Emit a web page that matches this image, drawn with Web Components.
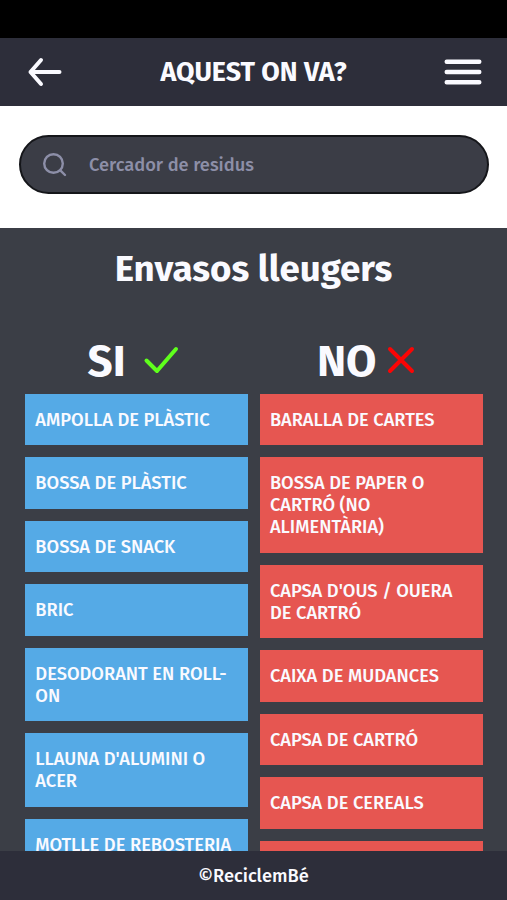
<!DOCTYPE html>
<html lang="ca">
<head>
<meta charset="utf-8">
<meta name="viewport" content="width=device-width, initial-scale=1">
<title>ReciclemBé</title>
<style>
    html, body {
        margin: 0;
        height: 100%;
        overflow: hidden;
    }
    body {
        font-family: "Fira Sans", "Noto Sans", "Open Sans", sans-serif;
        color: #fafaff;
        background-color: #000;
    }
</style>
</head>
<body>
<recycle-app></recycle-app>
<script>
    class AppHeader extends HTMLElement {
        constructor() {
            super();
            this.attachShadow({ mode: "open" })
                .innerHTML = /*html*/ `
                <style>
                    :host {
                        display: grid;
                        grid-template-columns: 60px 1fr 60px;
                        align-items: center;
                        height: 67.5px;
                        box-sizing: border-box;
                        padding: 0 25px 0 27px;
                        background-color: #2d2e3a;
                    }
                    h1 {
                        margin: 0 2px 0 0;
                        font-size: 26.8px;
                        line-height: 32px;
                        font-weight: 700;
                        text-align: center;
                        white-space: nowrap;
                    }
                    svg {
                        display: block;
                        fill: none;
                        stroke: #fafaff;
                        stroke-linecap: round;
                        stroke-linejoin: round;
                    }
                    .menu {
                        justify-self: end;
                    }
                </style>
                <svg width="36" height="32" viewBox="0 0 36 32" stroke-width="4">
                    <path d="M14 4L3.5 16L14 28M3.5 16H32.5"/>
                </svg>
                <h1><slot></slot></h1>
                <svg class="menu" width="38" height="28" viewBox="0 0 38 28" stroke-width="4.4">
                    <path d="M2.7 3.8H35.3M2.7 14H35.3M2.7 24.2H35.3"/>
                </svg>
            `;
        }
    }
    customElements.define('app-header', AppHeader);

    class SearchBar extends HTMLElement {
        constructor() {
            super();
            this.attachShadow({ mode: "open" })
                .innerHTML = /*html*/ `
                <style>
                    :host {
                        display: block;
                        height: 122.5px;
                        box-sizing: border-box;
                        padding: 29.5px 18px 0 19px;
                        background-color: #fff;
                    }
                    div {
                        display: flex;
                        align-items: center;
                        gap: 21px;
                        height: 59px;
                        box-sizing: border-box;
                        padding-left: 21px;
                        border: 2px solid #15161a;
                        border-radius: 30px;
                        background-color: #3b3d46;
                        color: #8d8fa8;
                    }
                    svg {
                        fill: none;
                        stroke: currentColor;
                        stroke-width: 2.4;
                        stroke-linecap: round;
                    }
                    span {
                        font-size: 18.3px;
                        font-weight: 500;
                    }
                </style>
                <div>
                    <svg width="26" height="26" viewBox="0 0 26 26">
                        <circle cx="11.5" cy="11.5" r="9.3"/>
                        <path d="M18.3 18.3L23 23"/>
                    </svg>
                    <span><slot></slot></span>
                </div>
            `;
        }
    }
    customElements.define('search-bar', SearchBar);

    class WasteItem extends HTMLElement {
        constructor() {
            super();
            this.attachShadow({ mode: "open" })
                .innerHTML = /*html*/ `
                <style>
                    :host {
                        display: block;
                        box-sizing: border-box;
                        padding: 15px 10px 14.3px;
                        background-color: var(--item-color);
                        font-size: 18.3px;
                        line-height: 22px;
                        font-weight: 500;
                    }
                </style>
                <slot></slot>
            `;
        }
    }
    customElements.define('waste-item', WasteItem);

    class WasteColumn extends HTMLElement {
        constructor() {
            super();
            this.attachShadow({ mode: "open" })
                .innerHTML = /*html*/ `
                <style>
                    :host {
                        display: flex;
                        flex-direction: column;
                        gap: 12.2px;
                        --item-color: #55aae6;
                    }
                    :host([type="no"]) {
                        --item-color: #e65651;
                    }
                    header {
                        display: flex;
                        align-items: center;
                        justify-content: center;
                        gap: 17px;
                        height: 40px;
                        padding-right: 7px;
                        margin-bottom: 1.5px;
                    }
                    :host([type="no"]) header {
                        gap: 10.5px;
                        padding-right: 10.5px;
                    }
                    h3 {
                        margin: 3px 0 0;
                        font-size: 44px;
                        line-height: 40px;
                        font-weight: 700;
                    }
                    svg {
                        fill: none;
                        stroke: #5fff1c;
                        stroke-width: 4;
                        stroke-linecap: round;
                        stroke-linejoin: round;
                    }
                    :host([type="no"]) svg {
                        stroke: #fb0505;
                    }
                </style>
                <header>
                    <h3></h3>
                    <svg height="28"><path/></svg>
                </header>
                <slot></slot>
            `;
        }
        get type() {
            return this.getAttribute('type');
        }
        connectedCallback() {
            const no = this.type === 'no';
            const svg = this.shadowRoot.querySelector('svg');
            this.shadowRoot.querySelector('h3').textContent = no ? 'NO' : 'SI';
            svg.setAttribute('width', no ? 28 : 36);
            svg.setAttribute('viewBox', no ? '0 0 28 28' : '0 0 36 28');
            svg.querySelector('path').setAttribute('d', no ? 'M3 3L25 25M25 3L3 25' : 'M3.5 14.5L14 25L33 3');
        }
    }
    customElements.define('waste-column', WasteColumn);

    class WasteGuide extends HTMLElement {
        constructor() {
            super();
            this.attachShadow({ mode: "open" })
                .innerHTML = /*html*/ `
                <style>
                    :host {
                        display: block;
                        overflow: hidden;
                        background-color: #3b3e46;
                    }
                    h2 {
                        margin: 18px 0 48.3px;
                        font-size: 36.7px;
                        line-height: 46px;
                        font-weight: 700;
                        text-align: center;
                    }
                    .columns {
                        display: grid;
                        grid-template-columns: 1fr 1fr;
                        align-items: start;
                        gap: 12px;
                        padding: 0 24.5px 0 25.3px;
                    }
                </style>
                <h2></h2>
                <div class="columns"><slot></slot></div>
            `;
        }
        connectedCallback() {
            this.shadowRoot.querySelector('h2').textContent = this.getAttribute('heading');
        }
    }
    customElements.define('waste-guide', WasteGuide);

    class AppFooter extends HTMLElement {
        constructor() {
            super();
            this.attachShadow({ mode: "open" })
                .innerHTML = /*html*/ `
                <style>
                    :host {
                        display: flex;
                        align-items: center;
                        justify-content: center;
                        background-color: #2d2e3a;
                        font-size: 18.3px;
                        font-weight: 500;
                    }
                </style>
                <slot></slot>
            `;
        }
    }
    customElements.define('app-footer', AppFooter);

    class RecycleApp extends HTMLElement {
        constructor() {
            super();
            this.attachShadow({ mode: "open" })
                .innerHTML = /*html*/ `
                <style>
                    :host {
                        display: grid;
                        grid-template-rows: 38px auto auto minmax(0, 1fr) 49px;
                        height: 100vh;
                    }
                </style>
                <div></div>
                <app-header>AQUEST ON VA?</app-header>
                <search-bar>Cercador de residus</search-bar>
                <waste-guide heading="Envasos lleugers">
                    <waste-column type="si">
                        <waste-item>AMPOLLA DE PLÀSTIC</waste-item>
                        <waste-item>BOSSA DE PLÀSTIC</waste-item>
                        <waste-item>BOSSA DE SNACK</waste-item>
                        <waste-item>BRIC</waste-item>
                        <waste-item>DESODORANT EN ROLL-ON</waste-item>
                        <waste-item>LLAUNA D'ALUMINI O ACER</waste-item>
                        <waste-item>MOTLLE DE REBOSTERIA</waste-item>
                    </waste-column>
                    <waste-column type="no">
                        <waste-item>BARALLA DE CARTES</waste-item>
                        <waste-item>BOSSA DE PAPER O CARTRÓ (NO ALIMENTÀRIA)</waste-item>
                        <waste-item>CAPSA D'OUS / OUERA DE CARTRÓ</waste-item>
                        <waste-item>CAIXA DE MUDANCES</waste-item>
                        <waste-item>CAPSA DE CARTRÓ</waste-item>
                        <waste-item>CAPSA DE CEREALS</waste-item>
                        <waste-item>&nbsp;</waste-item>
                    </waste-column>
                </waste-guide>
                <app-footer>©ReciclemBé</app-footer>
            `;
        }
    }
    customElements.define('recycle-app', RecycleApp);
</script>
</body>
</html>
